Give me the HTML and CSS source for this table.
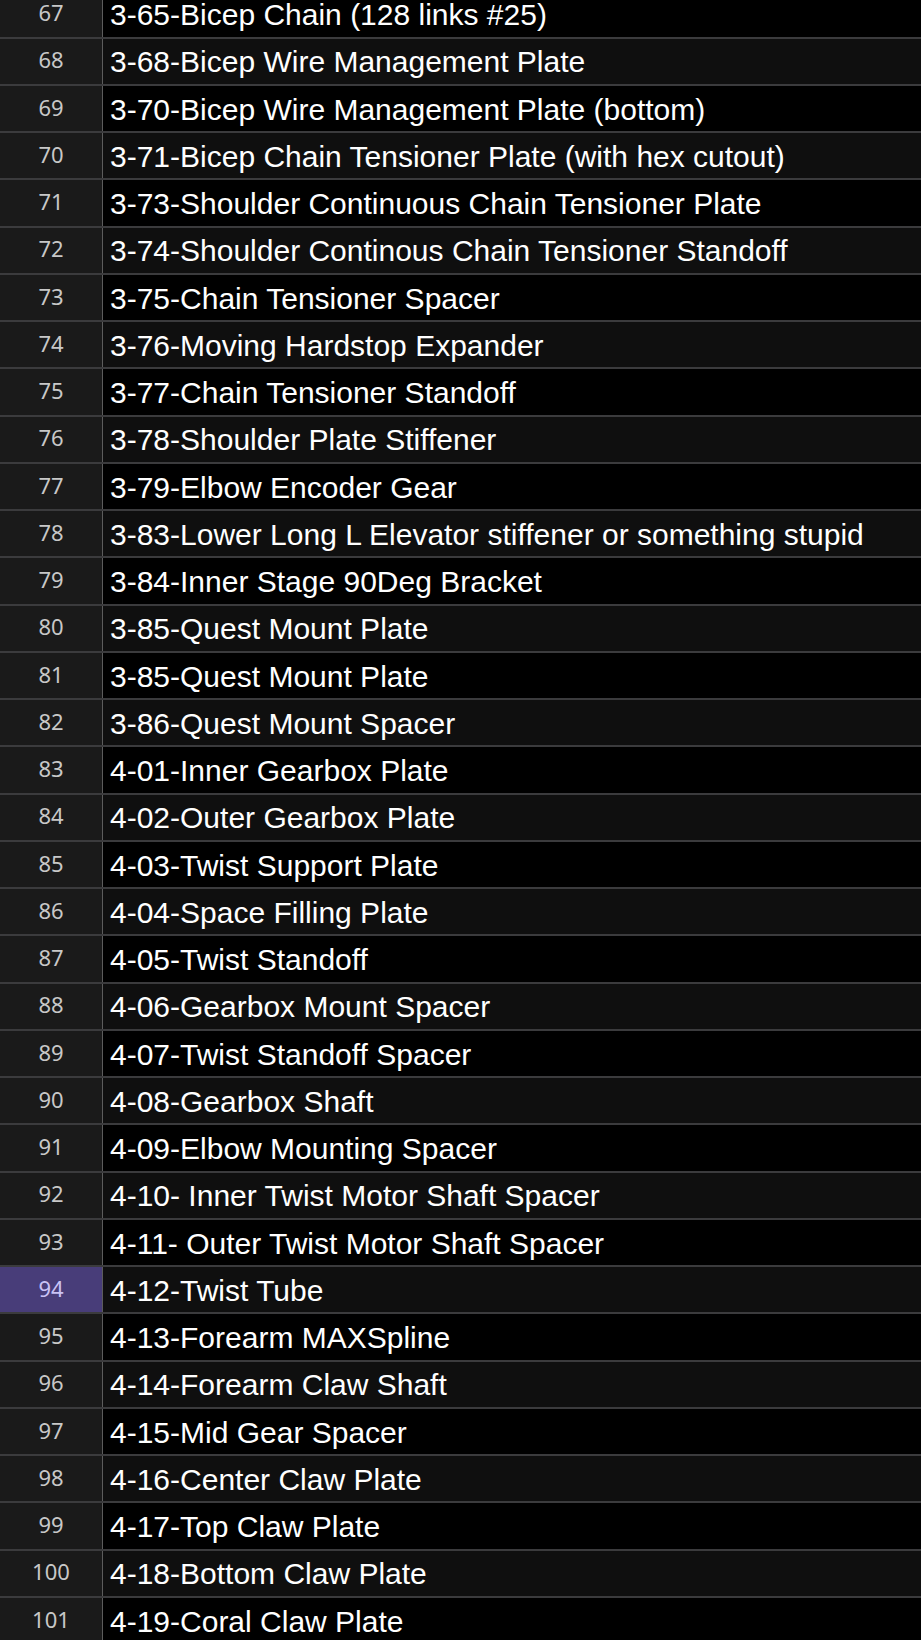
FILE: index.html
```html
<!DOCTYPE html>
<html>
<head>
<meta charset="utf-8">
<link rel="stylesheet" href="styles.css">
</head>
<body>
<div class="sheet">
  <div class="row"><div class="num">67</div><div class="cell">3-65-Bicep Chain (128 links #25)</div></div>
  <div class="row alt"><div class="num">68</div><div class="cell">3-68-Bicep Wire Management Plate</div></div>
  <div class="row"><div class="num">69</div><div class="cell">3-70-Bicep Wire Management Plate (bottom)</div></div>
  <div class="row alt"><div class="num">70</div><div class="cell">3-71-Bicep Chain Tensioner Plate (with hex cutout)</div></div>
  <div class="row"><div class="num">71</div><div class="cell">3-73-Shoulder Continuous Chain Tensioner Plate</div></div>
  <div class="row alt"><div class="num">72</div><div class="cell">3-74-Shoulder Continous Chain Tensioner Standoff</div></div>
  <div class="row"><div class="num">73</div><div class="cell">3-75-Chain Tensioner Spacer</div></div>
  <div class="row alt"><div class="num">74</div><div class="cell">3-76-Moving Hardstop Expander</div></div>
  <div class="row"><div class="num">75</div><div class="cell">3-77-Chain Tensioner Standoff</div></div>
  <div class="row alt"><div class="num">76</div><div class="cell">3-78-Shoulder Plate Stiffener</div></div>
  <div class="row"><div class="num">77</div><div class="cell">3-79-Elbow Encoder Gear</div></div>
  <div class="row alt"><div class="num">78</div><div class="cell">3-83-Lower Long L Elevator stiffener or something stupid</div></div>
  <div class="row"><div class="num">79</div><div class="cell">3-84-Inner Stage 90Deg Bracket</div></div>
  <div class="row alt"><div class="num">80</div><div class="cell">3-85-Quest Mount Plate</div></div>
  <div class="row"><div class="num">81</div><div class="cell">3-85-Quest Mount Plate</div></div>
  <div class="row alt"><div class="num">82</div><div class="cell">3-86-Quest Mount Spacer</div></div>
  <div class="row"><div class="num">83</div><div class="cell">4-01-Inner Gearbox Plate</div></div>
  <div class="row alt"><div class="num">84</div><div class="cell">4-02-Outer Gearbox Plate</div></div>
  <div class="row"><div class="num">85</div><div class="cell">4-03-Twist Support Plate</div></div>
  <div class="row alt"><div class="num">86</div><div class="cell">4-04-Space Filling Plate</div></div>
  <div class="row"><div class="num">87</div><div class="cell">4-05-Twist Standoff</div></div>
  <div class="row alt"><div class="num">88</div><div class="cell">4-06-Gearbox Mount Spacer</div></div>
  <div class="row"><div class="num">89</div><div class="cell">4-07-Twist Standoff Spacer</div></div>
  <div class="row alt"><div class="num">90</div><div class="cell">4-08-Gearbox Shaft</div></div>
  <div class="row"><div class="num">91</div><div class="cell">4-09-Elbow Mounting Spacer</div></div>
  <div class="row alt"><div class="num">92</div><div class="cell">4-10- Inner Twist Motor Shaft Spacer</div></div>
  <div class="row"><div class="num">93</div><div class="cell">4-11- Outer Twist Motor Shaft Spacer</div></div>
  <div class="row alt"><div class="num selected">94</div><div class="cell">4-12-Twist Tube</div></div>
  <div class="row"><div class="num">95</div><div class="cell">4-13-Forearm MAXSpline</div></div>
  <div class="row alt"><div class="num">96</div><div class="cell">4-14-Forearm Claw Shaft</div></div>
  <div class="row"><div class="num">97</div><div class="cell">4-15-Mid Gear Spacer</div></div>
  <div class="row alt"><div class="num">98</div><div class="cell">4-16-Center Claw Plate</div></div>
  <div class="row"><div class="num">99</div><div class="cell">4-17-Top Claw Plate</div></div>
  <div class="row alt"><div class="num">100</div><div class="cell">4-18-Bottom Claw Plate</div></div>
  <div class="row"><div class="num">101</div><div class="cell">4-19-Coral Claw Plate</div></div>
</div>
</body>
</html>
```

FILE: styles.css
```css
html, body {
  margin: 0;
  padding: 0;
  background: #000;
  overflow: hidden;
}

.sheet {
  display: flex;
  flex-direction: column;
  margin-top: -8.6px;
}

.row {
  display: flex;
  height: 47.25px;
  box-sizing: border-box;
  border-bottom: 2px solid #3b3b3d;
  background: #000;
}

.row.alt {
  background: #0f0f0f;
}

.num {
  width: 103px;
  flex: 0 0 103px;
  box-sizing: border-box;
  border-right: 1px solid #5c5c5c;
  background: #1a1a1a;
  color: #c8c8c8;
  font-family: "Noto Sans", sans-serif;
  font-size: 22px;
  display: flex;
  align-items: center;
  justify-content: center;
  padding-bottom: 4px;
}

.num.selected {
  background: #483d79;
  color: #c9c2f5;
}

.cell {
  flex: 1;
  min-width: 0;
  padding-left: 7px;
  color: #fff;
  font-family: "Liberation Sans", Arial, sans-serif;
  font-size: 30px;
  display: flex;
  align-items: center;
  white-space: nowrap;
  overflow: hidden;
  padding-top: 2px;
}
```
